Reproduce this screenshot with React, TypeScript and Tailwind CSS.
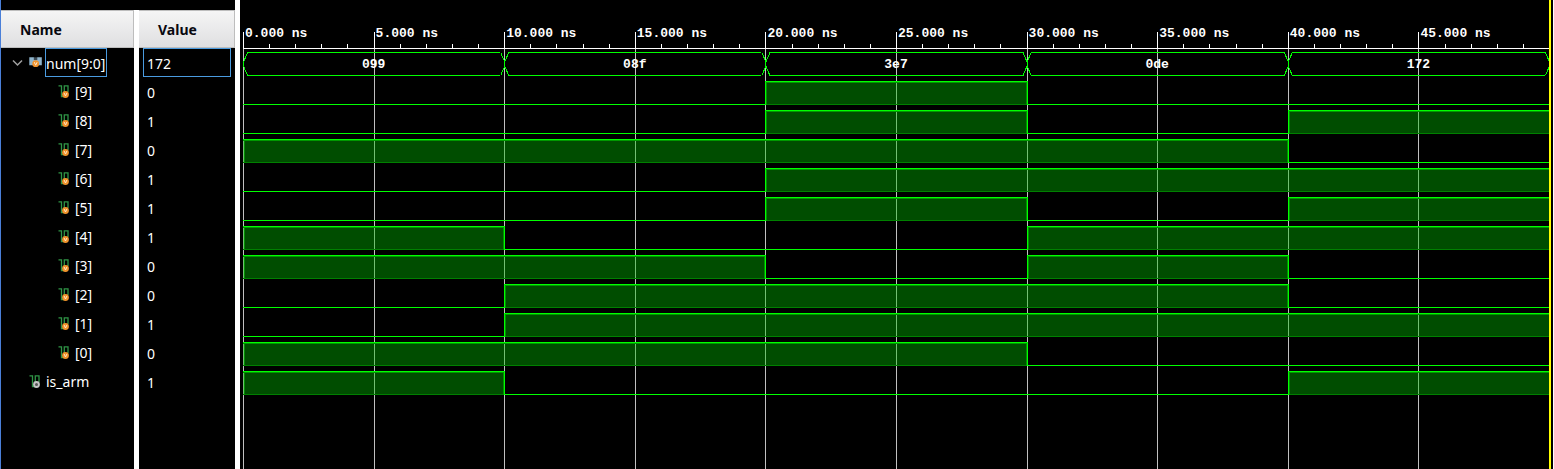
import React from "react";

type Signal = { name: string; value: string; levels: number[]; child: boolean };

const bus = ["099", "08f", "3e7", "0de", "172"];

const bits: Signal[] = [9, 8, 7, 6, 5, 4, 3, 2, 1, 0].map((bit) => ({
  name: `[${bit}]`,
  value: String((0x172 >> bit) & 1),
  levels: bus.map((word) => (parseInt(word, 16) >> bit) & 1),
  child: true,
}));

const signals: Signal[] = [
  ...bits,
  { name: "is_arm", value: "1", levels: [1, 0, 0, 0, 1], child: false },
];

const GREEN = "#00ff00";

function BusIcon() {
  return (
    <svg width="14" height="15" viewBox="0 0 14 15" className="shrink-0" aria-hidden="true">
      <path d="M0.300 2.300H4.800L6.500 4.500L8.300 2.300H12.800V10.300H9L6.500 7.500L4 10.300H0.300z" fill="#8fb4cc" />
      <path d="M4.800 2.300H8.300V5H4.800z" fill="#3c4a54" />
      <circle cx="6.700" cy="8.700" r="3.400" fill="#f0922b" />
      <path d="M5.300 7.200l1.400 3 1.400-3" fill="none" stroke="#ffe6c4" />
    </svg>
  );
}

function BitIcon({ variable }: { variable: boolean }) {
  return (
    <svg width="14" height="15" viewBox="0 0 14 15" className="shrink-0" aria-hidden="true">
      <path d="M0.500 1.800H3.500V12.500H6.300V1.800H10V8" fill="none" stroke="#2f9446" strokeWidth="1.300" />
      <circle cx="7.500" cy="10.500" r="3.400" fill={variable ? "#f0922b" : "#c4c4c4"} />
      {variable ? (
        <path d="M6.100 9l1.400 3 1.400-3" fill="none" stroke="#ffe6c4" />
      ) : (
        <circle cx="7.500" cy="10.500" r="1.500" fill="#555" />
      )}
    </svg>
  );
}

function Ruler() {
  return (
    <div className="relative h-8 border-b border-white">
      <svg className="absolute inset-0 h-full w-full overflow-visible" shapeRendering="crispEdges" aria-hidden="true">
        <g transform="translate(0.5 0)">
          {Array.from({ length: 50 }, (_, i) => (
            <line key={i} x1={`${i * 2}%`} x2={`${i * 2}%`} y1={i % 5 === 0 ? 15 : 27} y2="32" stroke="#fff" />
          ))}
        </g>
      </svg>
      <div className="grid grid-cols-10 pt-[9px]">
        {Array.from({ length: 10 }, (_, i) => (
          <span key={i} className="pl-0.5 text-[13px] leading-4 font-bold whitespace-nowrap">
            {(i * 5).toFixed(3)} ns
          </span>
        ))}
      </div>
    </div>
  );
}

function BusWave() {
  return (
    <div className="relative h-[29px]">
      <svg className="absolute inset-0 h-full w-full" shapeRendering="crispEdges" aria-hidden="true">
        <g transform="translate(0.5 0)">
          {bus.map((word, i) => (
            <React.Fragment key={word}>
              <svg x={`${i * 20}%`} width="20%" className="overflow-visible">
                <path d="M4 3.500L0 13v4L4 26.500" fill="none" stroke={GREEN} />
              </svg>
              <svg x={`${i * 20 + 20}%`} className="overflow-visible">
                <path d="M-4 3.500L0 13v4L-4 26.500" fill="none" stroke={GREEN} />
              </svg>
            </React.Fragment>
          ))}
        </g>
      </svg>
      <div className="grid grid-cols-5 pt-[3px]">
        {bus.map((word) => (
          <div key={word} className="px-1">
            <div className="h-6 border-y border-[#00ff00] text-center text-[13px] leading-6 font-bold">
              {word}
            </div>
          </div>
        ))}
      </div>
    </div>
  );
}

function BitWave({ levels }: { levels: number[] }) {
  return (
    <svg className="block h-[29px] w-full overflow-visible" shapeRendering="crispEdges" aria-hidden="true">
      {levels.map((level, i) => {
        const x = `${i * 20}%`;
        const end = `${i * 20 + 20}%`;
        return level === 1 ? (
          <g key={i}>
            <rect x={x} y="3" width="20%" height="24" fill="#00c000" fillOpacity="0.4" />
            <line x1={x} x2={end} y1="26.500" y2="26.500" stroke="#008000" />
            <line x1={x} x2={end} y1="4.500" y2="4.500" stroke="#009900" />
            <line x1={x} x2={end} y1="3.500" y2="3.500" stroke={GREEN} />
          </g>
        ) : (
          <line key={i} x1={x} x2={end} y1="26.500" y2="26.500" stroke={GREEN} />
        );
      })}
      {levels.map((level, i) => {
        const previous = i === 0 ? 0 : levels[i - 1];
        if (level === previous) return null;
        const x = `${i * 20}%`;
        return (
          <g key={i}>
            <line
              x1={x}
              x2={x}
              y1="4"
              y2="27"
              stroke="#009000"
              transform={level === 1 ? "translate(1.5 0)" : "translate(-0.5 0)"}
            />
            {i > 0 && <line x1={x} x2={x} y1="3" y2="27" stroke={GREEN} transform="translate(0.5 0)" />}
          </g>
        );
      })}
    </svg>
  );
}

function GridLines() {
  return (
    <svg className="pointer-events-none absolute inset-0 h-full w-full overflow-visible" shapeRendering="crispEdges" aria-hidden="true">
      <g transform="translate(0.5 0)">
        {Array.from({ length: 10 }, (_, i) => (
          <line key={i} x1={`${i * 10}%`} x2={`${i * 10}%`} y1="0" y2="100%" stroke="#c0c0c0" />
        ))}
      </g>
    </svg>
  );
}

function Header({ children }: { children: string }) {
  return (
    <h2 className="mt-2.5 h-[38px] border-t border-r border-b border-[#bdbdbd] bg-linear-to-b from-[#f5f5f5] to-[#dfdfe1] pl-[19px] text-sm leading-[37px] font-bold text-[#08080f]">
      {children}
    </h2>
  );
}

export default function App() {
  return (
    <main className="flex min-h-screen bg-black font-['Noto_Sans',sans-serif] text-sm text-white">
      <section className="w-[134px] shrink-0 border-l border-[#4a7fd8]">
        <Header>Name</Header>
        <ul>
          <li className="flex h-[29px] items-center pl-[11px]">
            <button type="button" aria-label="Collapse num[9:0]" className="mr-1.5 block">
              <svg width="11" height="8" viewBox="0 0 11 8" aria-hidden="true">
                <path d="M1 1.500l4.500 4.500L10 1.500" fill="none" stroke="#a0a0a0" strokeWidth="1.500" />
              </svg>
            </button>
            <BusIcon />
            <span className="ml-0.5 h-[29px] border border-[#4a9be0] pr-px leading-[29px]">num[9:0]</span>
          </li>
          {signals.map((s) => (
            <li key={s.name} className={`flex h-[29px] items-center ${s.child ? "pl-[57px]" : "pl-7"}`}>
              <BitIcon variable={s.child} />
              <span className="ml-[3px] leading-[29px]">{s.name}</span>
            </li>
          ))}
        </ul>
      </section>
      <div className="mt-2.5 w-[5px] shrink-0 bg-white" />
      <section className="w-24 shrink-0">
        <Header>Value</Header>
        <ul>
          <li className="mx-1 h-[29px] border border-[#4a9be0] pl-[3px] leading-[29px]">172</li>
          {signals.map((s) => (
            <li key={s.name} className="h-[29px] pl-2 leading-[31px]">
              {s.value}
            </li>
          ))}
        </ul>
      </section>
      <div className="w-[5px] shrink-0 bg-white" />
      <section className="flex min-w-0 flex-1 flex-col pt-[17px] pl-[3px] font-['Liberation_Mono',monospace]">
        <Ruler />
        <div className="relative flex-1">
          <GridLines />
          <div className="relative">
            <BusWave />
            {signals.map((s) => (
              <BitWave key={s.name} levels={s.levels} />
            ))}
          </div>
        </div>
      </section>
      <div className="w-0.5 shrink-0 bg-[#ffff00]" />
      <div className="w-0.5 shrink-0 bg-black" />
      <div className="w-px shrink-0 bg-white" />
    </main>
  );
}
